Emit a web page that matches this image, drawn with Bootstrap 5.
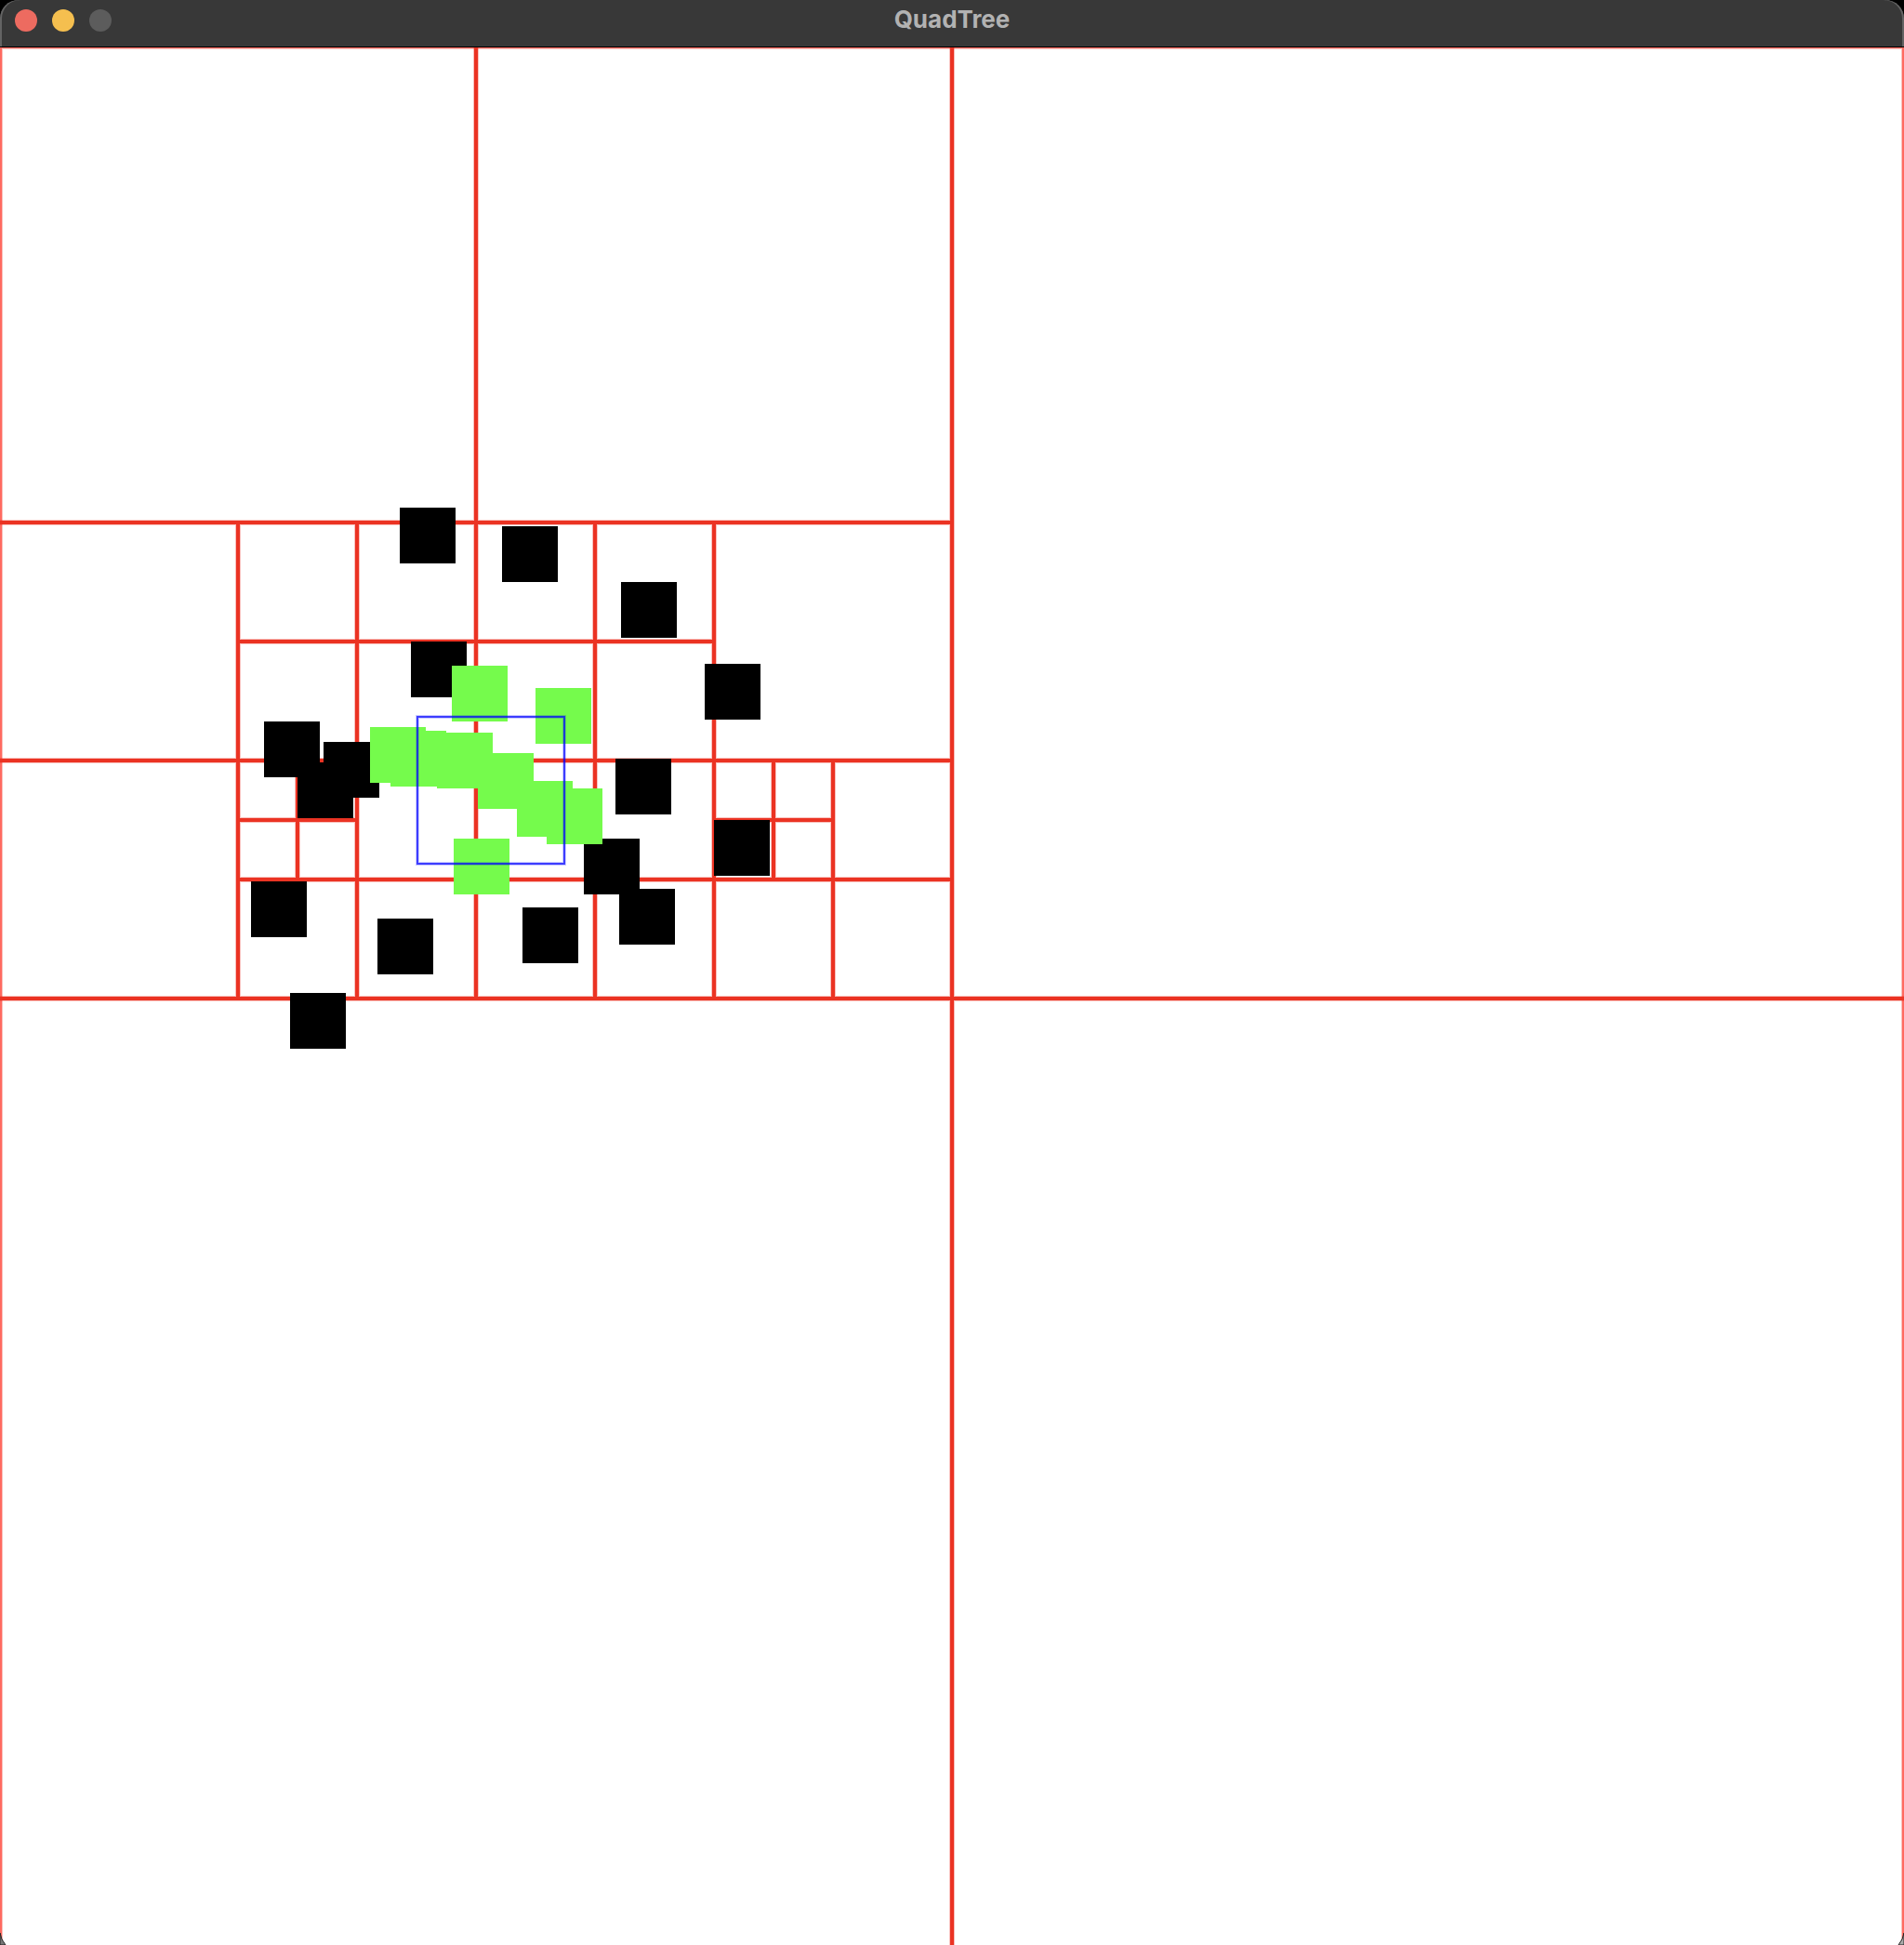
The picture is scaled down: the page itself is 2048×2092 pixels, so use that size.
<!DOCTYPE html>
<html lang="en">
<head>
<meta charset="utf-8">
<meta name="viewport" content="width=device-width, initial-scale=1">
<title>QuadTree</title>
<link rel="stylesheet" href="https://cdn.jsdelivr.net/npm/bootstrap@5.3.0/dist/css/bootstrap.min.css">
<style>
  body { background: #000; }
  .app-window { height: 100vh; background: #fff; }
  .title-strip {
    height: 51px;
    background: #383838;
    border-bottom: 1px solid #000;
    padding: 0 16px 6px;
    border-radius: 20px 20px 0 0;
    box-shadow: inset 2px 0 #636363, inset -2px 0 #636363;
  }
  .title-back { background: #000; }
  .title-strip h1 { font: 700 26px/32px Inter, "Liberation Sans", sans-serif; color: #b2b2b2; padding-bottom: 2px; }
  .lights { gap: 16px; }
  .light { width: 24px; height: 24px; }
  .light-close { background: #ed6b60; }
  .light-min { background: #f5bf4f; }
  .light-zoom, .light-zoom:disabled { background: #5c5c5c; opacity: 1; }
  .plane-halo { stroke: #eb3323; stroke-width: 6; stroke-opacity: .3; fill: none; }
  .plane-line { stroke: #eb3323; stroke-width: 4; fill: none; }
  .plane-edge { stroke: #ff6a60; stroke-width: 4; fill: none; }
  .hits { fill: #75fb4c; }
  .query { fill: none; stroke: #00f; stroke-opacity: .7; stroke-width: 2; }
  .query-halo { fill: none; stroke: #00f; stroke-opacity: .2; stroke-width: 4; }
  .corner { width: 8px; height: 14px; }
</style>
<script src="https://cdn.jsdelivr.net/npm/bootstrap@5.3.0/dist/js/bootstrap.bundle.min.js"></script>
</head>
<body>
<div class="app-window d-flex flex-column overflow-hidden position-relative">
  <div class="title-back flex-shrink-0">
    <header class="title-strip d-flex align-items-center">
      <div class="lights d-flex flex-fill w-50">
        <button type="button" class="light light-close btn p-0 border-0 rounded-circle" aria-label="Close"></button>
        <button type="button" class="light light-min btn p-0 border-0 rounded-circle" aria-label="Minimize"></button>
        <button type="button" class="light light-zoom btn p-0 border-0 rounded-circle" aria-label="Zoom" disabled></button>
      </div>
      <h1 class="mb-0 flex-shrink-0">QuadTree</h1>
      <div class="flex-fill w-50"></div>
    </header>
  </div>
  <main class="flex-shrink-0">
    <svg class="d-block w-100" viewBox="0 1 2048 2048" role="img" aria-label="Quadtree cells, points and query range">
      <defs>
        <path id="cells" d="M1024 0V2048 M0 1024H2048
          M512 0V1024 M0 512H1024
          M256 512V1024 M768 512V1024 M0 768H1024
          M384 512V1024 M640 512V1024 M256 640H768 M256 896H1024 M896 768V1024
          M320 768V896 M256 832H384 M832 768V896 M768 832H896"/>
        <rect id="pt" width="60" height="60"/>
        <rect id="root" width="2048" height="2048"/>
      </defs>
      <use href="#root" class="plane-halo"/>
      <use href="#root" class="plane-edge"/>
      <use href="#cells" class="plane-halo"/>
      <use href="#cells" class="plane-line"/>
      <g>
        <use href="#pt" x="430" y="496"/>
        <use href="#pt" x="540" y="516"/>
        <use href="#pt" x="668" y="576"/>
        <use href="#pt" x="442" y="640"/>
        <use href="#pt" x="758" y="664"/>
        <use href="#pt" x="284" y="726"/>
        <use href="#pt" x="348" y="748"/>
        <use href="#pt" x="320" y="770"/>
        <use href="#pt" x="270" y="898"/>
        <use href="#pt" x="406" y="938"/>
        <use href="#pt" x="312" y="1018"/>
        <use href="#pt" x="662" y="766"/>
        <use href="#pt" x="628" y="852"/>
        <use href="#pt" x="666" y="906"/>
        <use href="#pt" x="562" y="926"/>
        <use href="#pt" x="768" y="832"/>
      </g>
      <g class="hits">
        <use href="#pt" x="486" y="666"/>
        <use href="#pt" x="576" y="690"/>
        <use href="#pt" x="398" y="732"/>
        <use href="#pt" x="420" y="736"/>
        <use href="#pt" x="470" y="738"/>
        <use href="#pt" x="514" y="760"/>
        <use href="#pt" x="556" y="790"/>
        <use href="#pt" x="588" y="798"/>
        <use href="#pt" x="488" y="852"/>
      </g>
      <rect class="query-halo" x="449" y="721" width="158" height="158"/>
      <rect class="query" x="449" y="721" width="158" height="158"/>
    </svg>
  </main>
  <!-- rounded lower corners of the window -->
  <svg class="corner position-absolute bottom-0 start-0" viewBox="0 0 8 14" aria-hidden="true">
    <path d="M0 1Q1 8 6 14H0Z" fill="#777" stroke="#222"/>
  </svg>
  <svg class="corner position-absolute bottom-0 end-0" viewBox="0 0 8 14" aria-hidden="true">
    <path d="M8 1Q7 8 2 14H8Z" fill="#aaa" stroke="#222"/>
  </svg>
</div>
</body>
</html>
